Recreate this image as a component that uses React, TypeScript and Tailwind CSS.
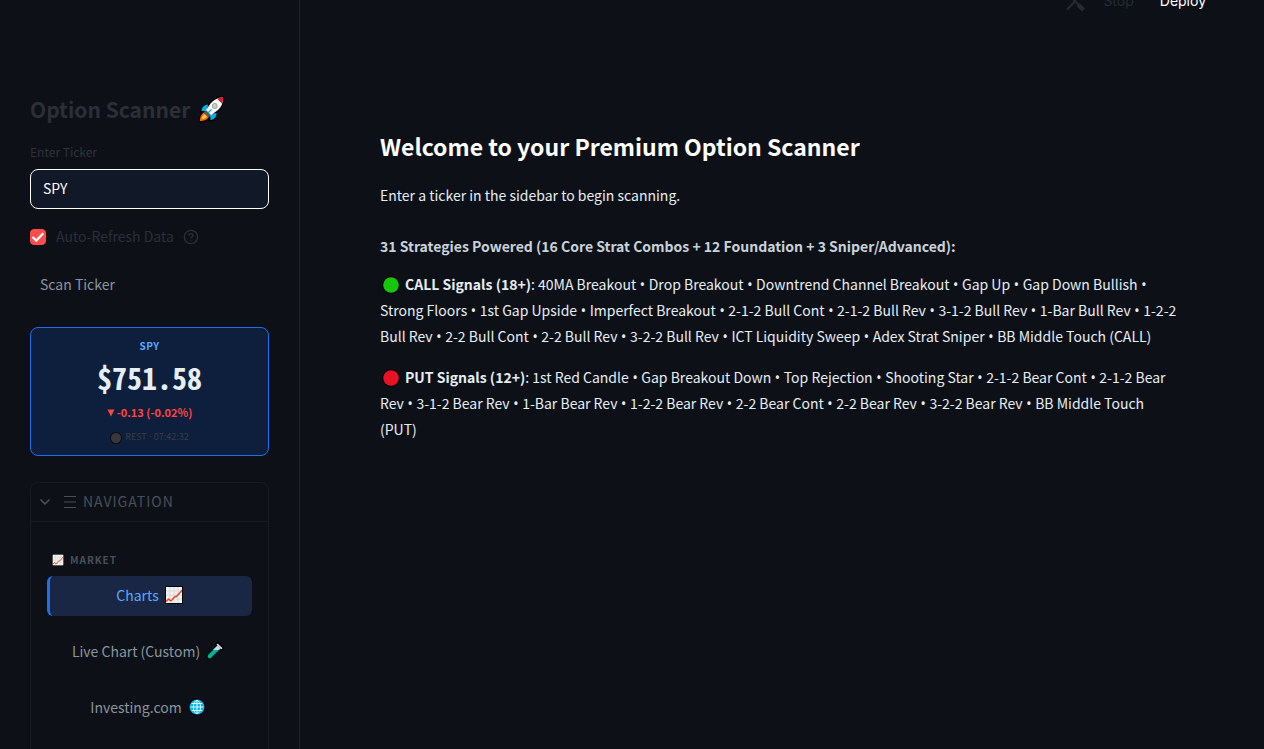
import { Fragment, useState } from "react";
import { ChevronDown, CircleHelp } from "lucide-react";

const callSignals = [
  "40MA Breakout",
  "Drop Breakout",
  "Downtrend Channel Breakout",
  "Gap Up",
  "Gap Down Bullish",
  "Strong Floors",
  "1st Gap Upside",
  "Imperfect Breakout",
  "2-1-2 Bull Cont",
  "2-1-2 Bull Rev",
  "3-1-2 Bull Rev",
  "1-Bar Bull Rev",
  "1-2-2 Bull Rev",
  "2-2 Bull Cont",
  "2-2 Bull Rev",
  "3-2-2 Bull Rev",
  "ICT Liquidity Sweep",
  "Adex Strat Sniper",
  "BB Middle Touch (CALL)",
];

const putSignals = [
  "1st Red Candle",
  "Gap Breakout Down",
  "Top Rejection",
  "Shooting Star",
  "2-1-2 Bear Cont",
  "2-1-2 Bear Rev",
  "3-1-2 Bear Rev",
  "1-Bar Bear Rev",
  "1-2-2 Bear Rev",
  "2-2 Bear Cont",
  "2-2 Bear Rev",
  "3-2-2 Bear Rev",
  "BB Middle Touch (PUT)",
];

function Rocket() {
  return (
    <svg viewBox="0 0 28 28" className="h-7 w-7" aria-hidden="true">
      <g stroke="#000" strokeWidth="2.4" strokeLinejoin="round">
        <path d="M9 10 L3.5 13 L3 17 L10 18Z M18 19 L15 25 L11 25 L10 18Z" />
        <path d="M25 2.500 C20 2.500 16 4.500 13 8 L6.500 17 L11 21.500 L20 15 C23.500 12 25 8 25 2.500Z" />
        <path d="M6.500 17 C3 19 2 22 1.800 26.200 C6 26 9.500 25 11 21.500Z" />
      </g>
      <path d="M10 9.500 C6 10 4 12 3.500 16 L9 16Z M18.500 18 C18.500 22 16.500 24.500 12.500 25 L12 19Z" fill="#00b1e8" />
      <path d="M6.500 17 C3 19 2 22 1.800 26.200 C6 26 9.500 25 11 21.500Z" fill="#f7630c" />
      <path d="M6.500 19 C4.500 20.500 4 22 3.800 24.200 C6 24 7.800 23.500 9 21.500Z" fill="#ffc83d" />
      <path d="M25 2.500 C20 2.500 16 4.500 13 8 L6.500 17 L11 21.500 L20 15 C23.500 12 25 8 25 2.500Z" fill="#fff" />
      <path d="M25 2.500 C22.800 2.500 21 2.900 19.200 3.700 L23.900 8.500 C24.700 6.600 25 5 25 2.500Z" fill="#e81224" />
      <path d="M8 15 L5.800 17.800 L10.200 22.200 L13 20Z" fill="#55585c" />
      <circle cx="16.700" cy="11" r="2.900" fill="#a6a6a6" />
      <circle cx="16.700" cy="11" r="1.900" fill="#cfcfcf" />
      <path d="M13.500 14.500 L10 18" stroke="#00b1e8" strokeWidth="1.300" />
    </svg>
  );
}

function ChartUp({ className }: { className: string }) {
  return (
    <svg viewBox="0 0 18 18" className={className} aria-hidden="true">
      <path d="M0 0H18V18H0Z" fill="#000" />
      <path d="M1 1H17V17H1Z" fill="#f2f2f2" />
      <path d="M5 1V17 M9 1V17 M13 1V17 M1 5H17 M1 9H17 M1 13H17" stroke="#d2d2d2" strokeWidth=".7" />
      <path d="M1 15.500 L3.500 13.200 L6 15 L10 10.500 L11.500 10.500 L17 4.300" fill="none" stroke="#f03a17" strokeWidth="1.300" />
    </svg>
  );
}

function TestTube() {
  return (
    <svg viewBox="0 0 18 18" className="h-[18px] w-[18px]" aria-hidden="true">
      <path d="M11.500 2.500 L15.500 6.500 M13 5 L3.500 14.500" stroke="#000" strokeWidth="5.500" strokeLinecap="round" />
      <path d="M11.500 6.500 L3.700 14.300" stroke="#00b294" strokeWidth="4.200" strokeLinecap="round" />
      <path d="M7 8 L11.500 3.500 L14.500 6.500 L13 8Z" fill="#b9dcf2" />
      <path d="M11.500 2.500 L15.500 6.300" stroke="#d4ecfa" strokeWidth="1.600" strokeLinecap="round" />
    </svg>
  );
}

function Globe() {
  return (
    <svg viewBox="0 0 18 18" className="h-[18px] w-[18px]" aria-hidden="true">
      <circle cx="9" cy="9" r="8.700" fill="#000" />
      <circle cx="9" cy="9" r="7.500" fill="#00b7f0" />
      <g fill="none" stroke="#e8f8ff" strokeWidth="1">
        <ellipse cx="9" cy="9" rx="3.600" ry="6.500" />
        <path d="M9 2.500V15.500 M2.500 9H15.500 M3.700 5.500H14.300 M3.700 12.500H14.300" />
      </g>
    </svg>
  );
}

function Dot({ color, className }: { color: string; className: string }) {
  return (
    <svg viewBox="0 0 18 18" className={className} aria-hidden="true">
      <circle cx="9" cy="9" r="8.800" fill="#000" />
      <circle cx="9" cy="9" r="7.800" fill={color} />
    </svg>
  );
}

function ToolsIcon() {
  return (
    <svg viewBox="0 0 24 24" className="h-6 w-6" fill="none" stroke="currentColor" aria-hidden="true">
      <path d="M2 20.500 L10 12.500 M14 9 L18 5" strokeWidth="2.400" />
      <path d="M6 8 L15 17" strokeWidth="2" />
      <path d="M13 15.500 L18.500 21" strokeWidth="4.400" />
      <path d="M3 4 L8 9 M17 2 V7 H22" strokeWidth="2.800" />
    </svg>
  );
}

function SignalList({ items }: { items: string[] }) {
  return (
    <>
      {items.map((item, i) => (
        <Fragment key={item}>
          {i > 0 && <span className="font-['Noto_Sans',sans-serif] leading-none"> • </span>}
          {item}
        </Fragment>
      ))}
    </>
  );
}

const navItems = [
  { id: "charts", label: "Charts", icon: <ChartUp className="h-[18px] w-[18px]" /> },
  { id: "live", label: "Live Chart (Custom)", icon: <TestTube /> },
  { id: "investing", label: "Investing.com", icon: <Globe /> },
];

export default function App() {
  const [ticker, setTicker] = useState("SPY");
  const [autoRefresh, setAutoRefresh] = useState(true);
  const [active, setActive] = useState("charts");
  const [navOpen, setNavOpen] = useState(true);

  return (
    <div className="flex h-screen overflow-hidden bg-[#0d1117] font-['Noto_Sans_CJK_SC','Noto_Sans',sans-serif] text-sm text-[#e6edf3]">
      {/* Sidebar */}
      <aside className="w-[300px] shrink-0 overflow-hidden border-r border-[#1f2430] pr-[30px] pl-[30px] pt-[91px]">
        <h2 className="flex h-9 items-center gap-2 text-[21px] font-semibold text-[#2c2e38]">
          Option Scanner <Rocket />
        </h2>

        <label htmlFor="ticker" className="mt-[13px] block text-xs leading-6 text-[#2f313c]">
          Enter Ticker
        </label>
        <input
          id="ticker"
          value={ticker}
          onChange={(e) => setTicker(e.target.value)}
          className="mt-[5px] block h-10 w-full rounded-lg border border-white bg-[#111827] px-3 pb-0.5 text-sm text-white outline-none"
        />

        <div className="mt-4 flex h-6 items-center text-[#2c2e38]">
          <span className="relative flex h-4 w-4">
            <input
              id="auto-refresh"
              type="checkbox"
              checked={autoRefresh}
              onChange={(e) => setAutoRefresh(e.target.checked)}
              className="peer h-4 w-4 appearance-none rounded-sm border border-[#31333f] checked:border-[#ff4b4b] checked:bg-[#ff4b4b]"
            />
            <svg viewBox="0 0 16 16" className="pointer-events-none absolute inset-0 hidden h-4 w-4 peer-checked:block" fill="none" stroke="#fff" strokeWidth="2.200">
              <path d="M2.500 8 L6.300 11.600 L13.300 4.200" />
            </svg>
          </span>
          <label htmlFor="auto-refresh" className="ml-2.5 pb-0.5">Auto-Refresh Data</label>
          <CircleHelp className="ml-[9px] h-4 w-4" strokeWidth={2} />
        </div>

        <button className="mt-4 block h-10 px-2.5 pb-0.5 text-[#8b949e]">Scan Ticker</button>

        {/* Quote card */}
        <div className="mt-[22px] rounded-lg border border-[#1f6feb] bg-[#0d1f3c] py-2 text-center">
          <div className="text-[10px] leading-5 font-bold tracking-wider text-[#58a6ff]">SPY</div>
          <div className="h-[42px] font-['Noto_Sans_Mono_CJK_SC','Liberation_Mono',monospace] text-[30px] leading-[42px] font-bold">
            $751.58
          </div>
          <div className="flex h-[30px] items-center justify-center gap-0.5 text-[11px] font-semibold text-[#ff4444]">
            <svg viewBox="0 0 8 8" className="h-2 w-2" aria-hidden="true">
              <path d="M0.500 0.500H7.500L4 7.500Z" fill="currentColor" />
            </svg>
            -0.13 (-0.02%)
          </div>
          <div className="flex h-[19px] items-center justify-center gap-[3px] text-[9px] text-[#373d45]">
            <Dot color="#383838" className="h-3 w-3" />
            <span>
              REST<span className="font-['Noto_Sans',sans-serif]"> · </span>07:42:32
            </span>
          </div>
        </div>

        {/* Navigation */}
        <nav className="mt-[26px] rounded-t-lg border border-[#161b22] pb-10">
          <button
            onClick={() => setNavOpen(!navOpen)}
            className="flex h-[38px] w-full items-center px-1.5 text-[#484f58]"
          >
            <ChevronDown className="h-4 w-4" strokeWidth={2.5} />
            <svg viewBox="0 0 12 12" className="ml-[11px] h-3 w-3" stroke="currentColor" aria-hidden="true">
              <path d="M0 .5H12 M0 6H12 M0 11.500H12" />
            </svg>
            <span className="ml-[7px] pb-0.5 tracking-[1px]">NAVIGATION</span>
          </button>
          {navOpen && (
            <div className="border-t border-[#161b22] px-4 pt-7">
              <div className="mb-1.5 flex h-5 items-center gap-1.5 pl-[5px] text-[10px] font-bold tracking-widest text-[#484f58]">
                <ChartUp className="h-3 w-3" />
                MARKET
              </div>
              <div className="flex flex-col gap-4">
                {navItems.map((item) => (
                  <button
                    key={item.id}
                    onClick={() => setActive(item.id)}
                    className={`flex h-10 w-full items-center justify-center gap-1.5 rounded-md pr-[3px] pb-0.5 text-sm ${
                      active === item.id
                        ? "border-l-3 border-[#1f6feb] bg-[#1a2744] text-[#58a6ff]"
                        : "text-[#8b949e]"
                    }`}
                  >
                    {item.label} {item.icon}
                  </button>
                ))}
              </div>
            </div>
          )}
        </nav>
      </aside>

      {/* Main */}
      <div className="min-w-0 flex-1">
        <header className="-mt-2.5 flex h-[22px] items-center justify-end pr-[58px] font-['Inter',sans-serif] text-sm text-[#262a33]">
          <ToolsIcon />
          <button disabled className="ml-3.5">Stop</button>
          <button className="ml-[26px] text-white">Deploy</button>
        </header>
        <main className="pt-[115px] pr-[84px] pl-20">
          <h1 className="text-[23px] leading-[38px] font-bold text-white">Welcome to your Premium Option Scanner</h1>
          <p className="mt-[17px] leading-[26px]">Enter a ticker in the sidebar to begin scanning.</p>
          <h2 className="mt-[25px] leading-[26px] font-semibold text-[#c9d1d9]">
            31 Strategies Powered (16 Core Strat Combos + 12 Foundation + 3 Sniper/Advanced):
          </h2>
          <p className="mt-3 leading-[26px]">
            <Dot color="#16c60c" className="mr-[5px] ml-0.5 inline h-[18px] w-[18px] align-[-4px]" />
            <strong className="font-semibold">CALL Signals (18+)</strong>: <SignalList items={callSignals} />
          </p>
          <p className="mt-[15px] leading-[26px]">
            <Dot color="#e81224" className="mr-[5px] ml-0.5 inline h-[18px] w-[18px] align-[-4px]" />
            <strong className="font-semibold">PUT Signals (12+)</strong>: <SignalList items={putSignals} />
          </p>
        </main>
      </div>
    </div>
  );
}
